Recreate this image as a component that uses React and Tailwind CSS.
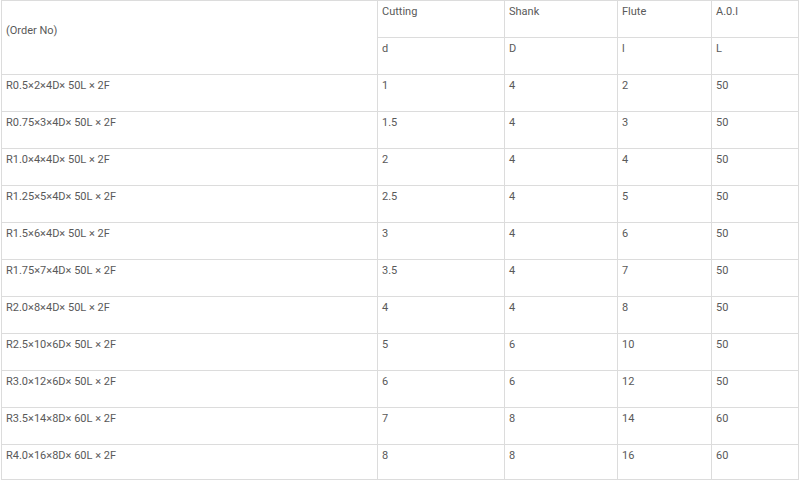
const rows = [
  ["R0.5×2×4D× 50L × 2F", "1", "4", "2", "50"],
  ["R0.75×3×4D× 50L × 2F", "1.5", "4", "3", "50"],
  ["R1.0×4×4D× 50L × 2F", "2", "4", "4", "50"],
  ["R1.25×5×4D× 50L × 2F", "2.5", "4", "5", "50"],
  ["R1.5×6×4D× 50L × 2F", "3", "4", "6", "50"],
  ["R1.75×7×4D× 50L × 2F", "3.5", "4", "7", "50"],
  ["R2.0×8×4D× 50L × 2F", "4", "4", "8", "50"],
  ["R2.5×10×6D× 50L × 2F", "5", "6", "10", "50"],
  ["R3.0×12×6D× 50L × 2F", "6", "6", "12", "50"],
  ["R3.5×14×8D× 60L × 2F", "7", "8", "14", "60"],
  ["R4.0×16×8D× 60L × 2F", "8", "8", "16", "60"],
];

const cell = "border border-[#dcdcdc] align-top pl-[4px] pt-[3px] leading-4";

export default function App() {
  return (
    <div className="w-[800px] h-[481px] bg-white pl-[1px] text-[11px] text-[#595959] font-['Roboto',sans-serif]">
      <table className="border-collapse table-fixed w-[797px]">
        <colgroup>
          <col className="w-[376px]" />
          <col className="w-[127px]" />
          <col className="w-[113px]" />
          <col className="w-[94px]" />
          <col className="w-[87px]" />
        </colgroup>
        <tbody>
          <tr className="h-[37px]">
            <td rowSpan={2} className="border border-[#dcdcdc] align-middle pl-[4px] pb-[14px] leading-4">
              (Order No)
            </td>
            <td className={cell}>Cutting</td>
            <td className={cell}>Shank</td>
            <td className={cell}>Flute</td>
            <td className={cell}>A.0.l</td>
          </tr>
          <tr className="h-[37px]">
            <td className={cell}>d</td>
            <td className={cell}>D</td>
            <td className={cell}>l</td>
            <td className={cell}>L</td>
          </tr>
          {rows.map((r, n) => (
            <tr key={r[0]} className={n === rows.length - 1 ? "h-[35px]" : "h-[37px]"}>
              {r.map((v, i) => (
                <td key={i} className={cell}>
                  {v}
                </td>
              ))}
            </tr>
          ))}
        </tbody>
      </table>
    </div>
  );
}
